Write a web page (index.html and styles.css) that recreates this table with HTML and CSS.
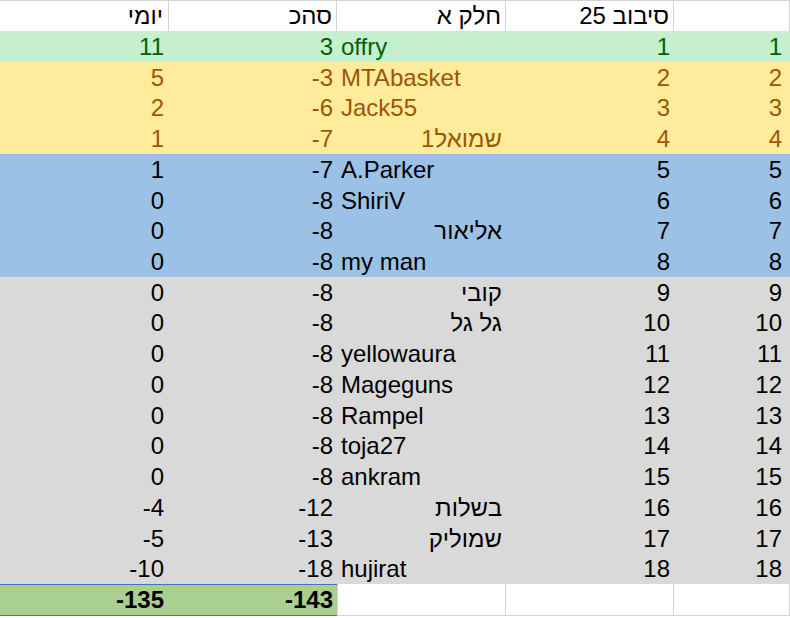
FILE: index.html
```html
<!DOCTYPE html>
<html lang="he">
<head>
<meta charset="utf-8">
<title>סיבוב 25</title>
<link rel="stylesheet" href="styles.css">
</head>
<body>
<div class="sheet">
  <div class="c hd num-h" dir="rtl">יומי</div>
  <div class="c hd num-h" dir="rtl">סהכ</div>
  <div class="c hd num-h" dir="rtl">חלק א</div>
  <div class="c hd num-h" dir="rtl">סיבוב 25</div>
  <div class="c hd last"></div>

  <div class="c good n">11</div><div class="c good n">3</div><div class="c good t">offry</div><div class="c good n">1</div><div class="c good n">1</div>
  <div class="c neu n">5</div><div class="c neu n">-3</div><div class="c neu t">MTAbasket</div><div class="c neu n">2</div><div class="c neu n">2</div>
  <div class="c neu n">2</div><div class="c neu n">-6</div><div class="c neu t">Jack55</div><div class="c neu n">3</div><div class="c neu n">3</div>
  <div class="c neu n">1</div><div class="c neu n">-7</div><div class="c neu h" dir="rtl">שמואל1</div><div class="c neu n">4</div><div class="c neu n">4</div>

  <div class="c blue n">1</div><div class="c blue n">-7</div><div class="c blue t">A.Parker</div><div class="c blue n">5</div><div class="c blue n">5</div>
  <div class="c blue n">0</div><div class="c blue n">-8</div><div class="c blue t">ShiriV</div><div class="c blue n">6</div><div class="c blue n">6</div>
  <div class="c blue n">0</div><div class="c blue n">-8</div><div class="c blue h" dir="rtl">אליאור</div><div class="c blue n">7</div><div class="c blue n">7</div>
  <div class="c blue n">0</div><div class="c blue n">-8</div><div class="c blue t">my man</div><div class="c blue n">8</div><div class="c blue n">8</div>

  <div class="c gray n">0</div><div class="c gray n">-8</div><div class="c gray h" dir="rtl">קובי</div><div class="c gray n">9</div><div class="c gray n">9</div>
  <div class="c gray n">0</div><div class="c gray n">-8</div><div class="c gray h" dir="rtl">גל גל</div><div class="c gray n">10</div><div class="c gray n">10</div>
  <div class="c gray n">0</div><div class="c gray n">-8</div><div class="c gray t">yellowaura</div><div class="c gray n">11</div><div class="c gray n">11</div>
  <div class="c gray n">0</div><div class="c gray n">-8</div><div class="c gray t">Mageguns</div><div class="c gray n">12</div><div class="c gray n">12</div>
  <div class="c gray n">0</div><div class="c gray n">-8</div><div class="c gray t">Rampel</div><div class="c gray n">13</div><div class="c gray n">13</div>
  <div class="c gray n">0</div><div class="c gray n">-8</div><div class="c gray t">toja27</div><div class="c gray n">14</div><div class="c gray n">14</div>
  <div class="c gray n">0</div><div class="c gray n">-8</div><div class="c gray t">ankram</div><div class="c gray n">15</div><div class="c gray n">15</div>
  <div class="c gray n">-4</div><div class="c gray n">-12</div><div class="c gray h" dir="rtl">בשלות</div><div class="c gray n">16</div><div class="c gray n">16</div>
  <div class="c gray n">-5</div><div class="c gray n">-13</div><div class="c gray h" dir="rtl">שמוליק</div><div class="c gray n">17</div><div class="c gray n">17</div>
  <div class="c gray n">-10</div><div class="c gray n">-18</div><div class="c gray t">hujirat</div><div class="c gray n">18</div><div class="c gray n">18</div>

  <div class="c tot n">-135</div><div class="c tot n">-143</div><div class="c blank"></div><div class="c blank"></div><div class="c blank last"></div>
</div>
</body>
</html>
```

FILE: styles.css
```css
html, body {
  margin: 0;
  padding: 0;
  background: #ffffff;
}

.sheet {
  display: grid;
  grid-template-columns: 169px 168px 169px 168px 116px;
  grid-template-rows: 31px repeat(18, 30.72px) 31.6px;
  font-family: "Liberation Sans", Arial, sans-serif;
  font-size: 24px;
  color: #000000;
  width: 790px;
}

.c {
  box-sizing: border-box;
  line-height: 30px;
  padding: 1px 4px 0 4px;
  white-space: nowrap;
  overflow: hidden;
}

.hd {
  border-top: 1px solid #d4d4d4;
  border-right: 1px solid #d4d4d4;
  line-height: 29px;
  padding-top: 0;
  text-align: right;
}

.hd:first-child {
  padding-right: 5px;
}

.n {
  text-align: right;
  direction: ltr;
}

.sheet > .n:nth-child(5n+1) {
  padding-right: 5px;
}

.sheet > .n:nth-child(5n) {
  padding-right: 8px;
}

.t {
  text-align: left;
  direction: ltr;
}

.h {
  text-align: right;
}

.good {
  background: #c6efce;
  color: #006100;
}

.neu {
  background: #ffeb9c;
  color: #9c5700;
}

.blue {
  background: #9bc2e6;
}

.gray {
  background: #d9d9d9;
}

.tot {
  background: #a9d08e;
  font-weight: bold;
  border-top: 1px solid #4472c4;
  border-bottom: 1px solid #4472c4;
  line-height: 29px;
  padding-top: 0;
}

.blank {
  border-right: 1px solid #d4d4d4;
  border-bottom: 1px solid #d4d4d4;
}

.blank:nth-child(5n+3) {
  border-left: 1px solid #d4d4d4;
}
```
